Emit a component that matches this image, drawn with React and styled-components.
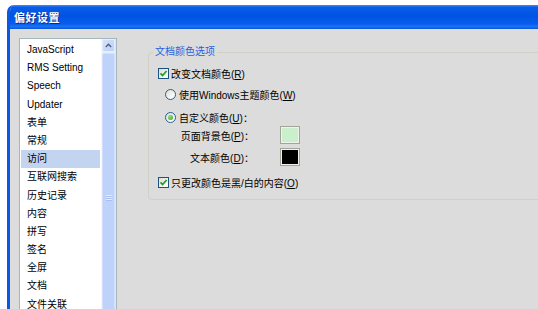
import React from 'react';
import styled, { createGlobalStyle } from 'styled-components';

const Global = createGlobalStyle`
  html, body { margin: 0; padding: 0; background: #ffffff; overflow: hidden; }
  body {
    font-family: "Liberation Sans", "Noto Sans CJK SC", sans-serif;
    font-size: 10px;
    color: #000;
  }
`;

const Screen = styled.div`
  width: 538px;
  height: 309px;
  overflow: hidden;
  box-sizing: border-box;
  padding: 5px 0 0 7px;
`;

const Window = styled.div`
  width: 560px;
  height: 330px;
  display: flex;
  flex-direction: column;
  border-left: 3px solid #0a58e4;
  border-top-left-radius: 7px;
  overflow: hidden;
  background: #dcdcdc;
`;

const TitleBar = styled.div`
  height: 24px;
  flex: none;
  display: flex;
  align-items: center;
  padding-left: 4px;
  background: linear-gradient(
    to bottom,
    #3d8ef6 0%,
    #0a5ce8 10%,
    #0054e2 45%,
    #075ced 78%,
    #1a72f5 90%,
    #0a55dc 100%
  );
  color: #fff;
  font-weight: bold;
  font-size: 11px;
  text-shadow: 1px 1px 0 #0a2c8a;
  letter-spacing: 0.5px;
`;

const Client = styled.div`
  flex: 1;
  display: flex;
  align-items: flex-start;
  gap: 31px;
  padding: 9px 0 0 9px;
`;

const ListBox = styled.div`
  width: 98px;
  height: 300px;
  flex: none;
  box-sizing: border-box;
  border: 1px solid #a4b8bc;
  background: #fff;
  display: flex;
  overflow: hidden;
`;

const Items = styled.div`
  flex: 1;
  display: flex;
  flex-direction: column;
  padding-top: 2px;
`;

const Item = styled.div`
  height: 18.2px;
  line-height: 18.2px;
  flex: none;
  margin: 0 1px;
  padding-left: 6px;
  white-space: nowrap;
  background: ${(p) => (p.$selected ? '#c3d4f1' : 'transparent')};
`;

const ScrollBar = styled.div`
  width: 13px;
  flex: none;
  display: flex;
  flex-direction: column;
  background: #e8eefb;
  border-left: 1px solid #f4f7fd;
  border-right: 1px solid #dfe6ee;
`;

const ScrollButton = styled.div`
  height: 13px;
  flex: none;
  box-sizing: border-box;
  display: flex;
  align-items: center;
  justify-content: center;
  background: linear-gradient(135deg, #d6e2fc, #bccff8);
  border: 1px solid #e6edfd;
  border-radius: 2px;
`;

const Thumb = styled.div`
  height: 288px;
  flex: none;
  margin-top: 1px;
  display: flex;
  align-items: center;
  justify-content: center;
  background: #bfd2fa;
  border: 1px solid #d2defb;
  border-radius: 2px;
`;

const Grip = styled.div`
  width: 6px;
  height: 6px;
  background: repeating-linear-gradient(
    to bottom,
    #e6eefe 0,
    #e6eefe 1px,
    #a9bdf0 1px,
    #a9bdf0 2px
  );
`;

const Group = styled.fieldset`
  flex: 1;
  margin: 8px 0 0 0;
  padding: 0 0 9px 0;
  border: 1px solid #cfd0c6;
  border-radius: 4px;
  display: flex;
  flex-direction: column;
  min-width: 0;
`;

const Legend = styled.legend`
  margin-left: 4px;
  padding: 0 2px;
  line-height: 12px;
  color: #2a5fdc;
`;

const Row = styled.label`
  display: flex;
  align-items: center;
  height: 16px;
  gap: ${(p) => p.$gap || 2}px;
  margin-top: ${(p) => p.$top}px;
  padding-left: ${(p) => p.$indent}px;
  white-space: nowrap;
`;

const CheckBox = styled.span`
  width: 11px;
  height: 11px;
  box-sizing: border-box;
  flex: none;
  border: 1px solid #1f5182;
  background: linear-gradient(135deg, #dcdcd4 0%, #f4f4f0 60%, #ffffff 100%);
  display: flex;
  align-items: center;
  justify-content: center;
`;

const Radio = styled.span`
  width: 11px;
  height: 11px;
  box-sizing: border-box;
  flex: none;
  border: 1px solid #2a5d8e;
  border-radius: 50%;
  background: linear-gradient(135deg, #dcdcd4 0%, #f6f6f2 60%, #ffffff 100%);
  display: flex;
  align-items: center;
  justify-content: center;
`;

const Dot = styled.span`
  width: 5px;
  height: 5px;
  border-radius: 50%;
  background: radial-gradient(circle at 35% 35%, #8fe07c, #2aa52a);
`;

const ColorRow = styled.div`
  display: grid;
  grid-template-columns: 105px 20px;
  column-gap: 26px;
  align-items: center;
  margin-top: ${(p) => p.$top}px;
  height: 18px;
`;

const ColorLabel = styled.span`
  text-align: right;
  white-space: nowrap;
`;

const Swatch = styled.span`
  width: 20px;
  height: 18px;
  box-sizing: border-box;
  border: 1px solid #a3a397;
  padding: 1px;
  background: #f2f2ec;
  display: flex;
`;

const SwatchFill = styled.span`
  flex: 1;
  background: ${(p) => p.$color};
`;

const Check = () => (
  <svg width="9" height="9" viewBox="0 0 9 9">
    <path d="M1.5 4.3 L3.6 6.5 L7.6 2" fill="none" stroke="#21a121" strokeWidth="1.8" />
  </svg>
);

const UpArrow = () => (
  <svg width="7" height="5" viewBox="0 0 7 5">
    <path d="M0.8 4 L3.5 1.3 L6.2 4" fill="none" stroke="#4d6185" strokeWidth="1.4" />
  </svg>
);

const items = [
  'JavaScript',
  'RMS Setting',
  'Speech',
  'Updater',
  '表单',
  '常规',
  '访问',
  '互联网搜索',
  '历史记录',
  '内容',
  '拼写',
  '签名',
  '全屏',
  '文档',
  '文件关联',
];

export default function App() {
  return (
    <>
      <Global />
      <Screen>
        <Window>
          <TitleBar>偏好设置</TitleBar>
          <Client>
            <ListBox>
              <Items>
                {items.map((it) => (
                  <Item key={it} $selected={it === '访问'}>
                    {it}
                  </Item>
                ))}
              </Items>
              <ScrollBar>
                <ScrollButton>
                  <UpArrow />
                </ScrollButton>
                <Thumb>
                  <Grip />
                </Thumb>
              </ScrollBar>
            </ListBox>
            <Group>
              <Legend>文档颜色选项</Legend>
              <Row $top={7} $indent={9}>
                <CheckBox>
                  <Check />
                </CheckBox>
                <span>
                  改变文档颜色(<u>R</u>)
                </span>
              </Row>
              <Row $top={5} $indent={16} $gap={3}>
                <Radio />
                <span>
                  使用Windows主题颜色(<u>W</u>)
                </span>
              </Row>
              <Row $top={7} $indent={16} $gap={3}>
                <Radio>
                  <Dot />
                </Radio>
                <span>
                  自定义颜色(<u>U</u>)：
                </span>
              </Row>
              <ColorRow $top={1}>
                <ColorLabel>
                  页面背景色(<u>P</u>)：
                </ColorLabel>
                <Swatch>
                  <SwatchFill $color="#c9efcd" />
                </Swatch>
              </ColorRow>
              <ColorRow $top={4}>
                <ColorLabel>
                  文本颜色(<u>D</u>)：
                </ColorLabel>
                <Swatch>
                  <SwatchFill $color="#000000" />
                </Swatch>
              </ColorRow>
              <Row $top={8} $indent={9}>
                <CheckBox>
                  <Check />
                </CheckBox>
                <span>
                  只更改颜色是黑/白的内容(<u>O</u>)
                </span>
              </Row>
            </Group>
          </Client>
        </Window>
      </Screen>
    </>
  );
}
